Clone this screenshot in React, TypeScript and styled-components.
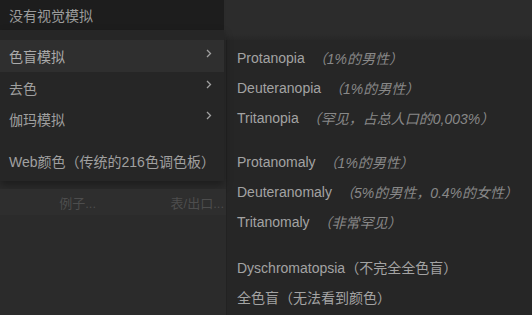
import React from "react";
import styled, { createGlobalStyle } from "styled-components";

const Global = createGlobalStyle`
  html, body { margin: 0; padding: 0; background: #2b2b2b; }
  body {
    font-family: "Liberation Sans", "Noto Sans CJK SC", sans-serif;
    font-size: 14px;
    -webkit-font-smoothing: antialiased;
  }
`;

const Page = styled.div`
  width: 532px;
  height: 315px;
  overflow: hidden;
  display: grid;
  grid-template-columns: 226px 1fr;
  background: #2b2b2b;
`;

const LeftCol = styled.div`
  display: flex;
  flex-direction: column;
  position: relative;
  z-index: 2;
`;

const TopItem = styled.div`
  height: 30px;
  width: 224px;
  background: #1d1d1d;
  color: #9c9c9c;
  display: flex;
  align-items: center;
  padding-left: 9px;
  box-sizing: border-box;
`;

const Menu = styled.div`
  width: 224px;
  background: #262626;
  padding: 10px 0 5px;
  box-shadow: 0 4px 8px rgba(0, 0, 0, 0.35);
  display: flex;
  flex-direction: column;
`;

const MenuRow = styled.div<{ $active?: boolean }>`
  height: ${(p) => (p.$active ? 32 : 31)}px;
  display: flex;
  align-items: center;
  justify-content: space-between;
  padding: 0 12px 0 9px;
  color: ${(p) => (p.$active ? "#ababab" : "#a0a0a0")};
  background: ${(p) => (p.$active ? "#2f2f2f" : "transparent")};
`;

const Chevron = styled.svg`
  width: 6px;
  height: 9px;
  margin-top: -6px;
`;

const MenuGap = styled.div`
  height: 11px;
`;

const Behind = styled.div`
  margin-top: 8px;
  height: 26px;
  background: #2e2e2e;
  display: flex;
  align-items: center;
  color: #4d4d4d;
  font-size: 13px;
`;

const BehindLabel = styled.span<{ $w: number; $align: string }>`
  width: ${(p) => p.$w}px;
  text-align: ${(p) => p.$align};
  white-space: nowrap;
  overflow: hidden;
`;

const RightCol = styled.div`
  display: flex;
  flex-direction: column;
`;

const RightTop = styled.div`
  height: 40px;
  background: linear-gradient(#2c2c2c 0, #2c2c2c 34px, #272727 40px);
`;

const Submenu = styled.div`
  flex: 1;
  background: #262626;
  border-left: 1px solid #222;
  padding-top: 3px;
  display: flex;
  flex-direction: column;
`;

const SubRow = styled.div`
  height: 30px;
  display: flex;
  align-items: center;
  padding-left: 10px;
  color: #a3a3a3;
  white-space: nowrap;
`;

const Note = styled.span`
  font-style: italic;
  color: #888888;
  margin-left: 8px;
`;

const SubGap = styled.div<{ $h: number }>`
  height: ${(p) => p.$h}px;
`;

const Arrow = () => (
  <Chevron viewBox="0 0 6 9">
    <path d="M1 1 L4.5 4.5 L1 8" fill="none" stroke="#a0a0a0" strokeWidth="1.3" />
  </Chevron>
);

export default function App() {
  return (
    <>
      <Global />
      <Page>
        <LeftCol>
          <TopItem>没有视觉模拟</TopItem>
          <Menu>
            <MenuRow $active>
              <span>色盲模拟</span>
              <Arrow />
            </MenuRow>
            <MenuRow>
              <span>去色</span>
              <Arrow />
            </MenuRow>
            <MenuRow>
              <span>伽玛模拟</span>
              <Arrow />
            </MenuRow>
            <MenuGap />
            <MenuRow>
              <span>Web颜色（传统的216色调色板）</span>
            </MenuRow>
          </Menu>
          <Behind>
            <BehindLabel $w={96} $align="right">例子...</BehindLabel>
            <BehindLabel $w={128} $align="right">表/出口...</BehindLabel>
          </Behind>
        </LeftCol>
        <RightCol>
          <RightTop />
          <Submenu>
            <SubRow>Protanopia<Note>（1%的男性）</Note></SubRow>
            <SubRow>Deuteranopia<Note>（1%的男性）</Note></SubRow>
            <SubRow>Tritanopia<Note>（罕见，占总人口的0,003%）</Note></SubRow>
            <SubGap $h={14} />
            <SubRow>Protanomaly<Note>（1%的男性）</Note></SubRow>
            <SubRow>Deuteranomaly<Note>（5%的男性，0.4%的女性）</Note></SubRow>
            <SubRow>Tritanomaly<Note>（非常罕见）</Note></SubRow>
            <SubGap $h={15} />
            <SubRow>Dyschromatopsia（不完全全色盲）</SubRow>
            <SubRow>全色盲（无法看到颜色）</SubRow>
          </Submenu>
        </RightCol>
      </Page>
    </>
  );
}
